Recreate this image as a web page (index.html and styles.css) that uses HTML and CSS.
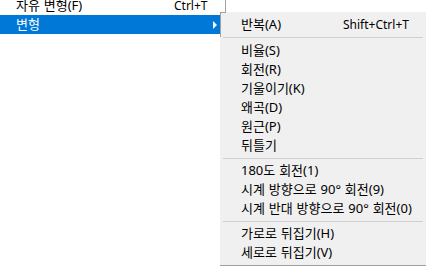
FILE: index.html
```html
<!DOCTYPE html>
<html lang="ko">
<head>
<meta charset="utf-8">
<link rel="stylesheet" href="styles.css">
</head>
<body>
<div class="menu">
  <div class="item"><span class="label">자유 변형(F)</span><span class="key">Ctrl+T</span></div>
  <div class="item active"><span class="label">변형</span><span class="arrow"></span></div>
</div>
<div class="submenu">
  <div class="sitem"><span class="slabel">반복(A)</span><span class="key">Shift+Ctrl+T</span></div>
  <div class="sep first"></div>
  <div class="sitem"><span class="slabel">비율(S)</span></div>
  <div class="sitem"><span class="slabel">회전(R)</span></div>
  <div class="sitem"><span class="slabel">기울이기(K)</span></div>
  <div class="sitem"><span class="slabel">왜곡(D)</span></div>
  <div class="sitem"><span class="slabel">원근(P)</span></div>
  <div class="sitem"><span class="slabel">뒤틀기</span></div>
  <div class="sep"></div>
  <div class="sitem"><span class="slabel">180도 회전(1)</span></div>
  <div class="sitem"><span class="slabel">시계 방향으로 90° 회전(9)</span></div>
  <div class="sitem"><span class="slabel">시계 반대 방향으로 90° 회전(0)</span></div>
  <div class="sep"></div>
  <div class="sitem"><span class="slabel">가로로 뒤집기(H)</span></div>
  <div class="sitem"><span class="slabel">세로로 뒤집기(V)</span></div>
</div>
</body>
</html>
```
FILE: styles.css
```css
html, body {
  margin: 0;
  padding: 0;
  background: #ffffff;
  overflow: hidden;
}
body {
  width: 426px;
  height: 267px;
  position: relative;
  font-family: "Noto Sans", "Noto Sans CJK KR", sans-serif;
  font-size: 12px;
  color: #000;
}
.menu {
  width: 225px;
  margin-top: -4px;
  border-right: 1px solid #a0a0a0;
  background: #ffffff;
}
.item {
  height: 19px;
  line-height: 19px;
  display: flex;
  align-items: center;
  padding-left: 16px;
  white-space: nowrap;
}
.label {
  width: 158px;
  flex: none;
  font-size: 13px;
  word-spacing: 0.5px;
}
.key {
  font-size: 12px;
}
.item.active {
  background: #0078d7;
  color: #ffffff;
}
.arrow {
  margin-left: auto;
  margin-right: 8px;
  width: 0;
  height: 0;
  border-left: 4px solid #ffffff;
  border-top: 4px solid transparent;
  border-bottom: 4px solid transparent;
}
.submenu {
  position: absolute;
  left: 220px;
  top: 12px;
  width: 206px;
  box-sizing: border-box;
  background: #f0f0f0;
  padding: 3px 0 3px;
  border-bottom: 1px solid #a0a0a0;
  z-index: 2;
}
.submenu::before {
  content: "";
  position: absolute;
  left: 0;
  top: 0;
  width: 5px;
  height: 24px;
  border-top: 1px solid #a0a0a0;
  border-left: 1px solid #a0a0a0;
}
.sitem {
  height: 19px;
  line-height: 19px;
  display: flex;
  align-items: center;
  padding-left: 21px;
  white-space: nowrap;
}
.slabel {
  width: 102px;
  flex: none;
  font-size: 13px;
  word-spacing: 0.5px;
}
.sep {
  height: 1px;
  background: #d0d0d0;
  margin: 3px 3px 2px 3px;
}
.sep.first {
  margin-bottom: 3px;
}
```
